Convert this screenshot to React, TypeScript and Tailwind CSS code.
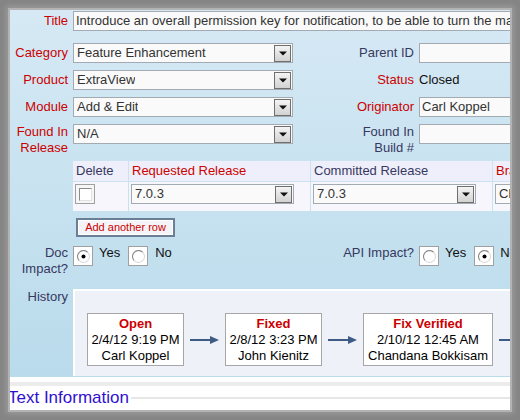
import React from "react";

const DropBtn = () => (
  <div className="ml-auto mr-px w-[17px] h-[17px] shrink-0 border border-[#6f6f6f] bg-gradient-to-b from-[#f4f4f4] to-[#d2d2d2] flex items-center justify-center">
    <svg width="8" height="5" viewBox="0 0 8 5">
      <path d="M0 0.5h8L4 4.5z" fill="#111" />
    </svg>
  </div>
);

const Select = ({ cls, text }: { cls: string; text: string }) => (
  <div className={`flex items-center h-[20px] bg-[#fafafa] border border-[#a4aab2] pl-[3px] shrink-0 ${cls}`}>
    <span className="text-[#333] whitespace-nowrap overflow-hidden">{text}</span>
    <DropBtn />
  </div>
);

const TextInput = ({ cls, text }: { cls: string; text?: string }) => (
  <div className={`h-[20px] bg-[#fafafa] border border-[#a4aab2] pl-[2px] leading-[18px] text-[#333] whitespace-nowrap overflow-hidden shrink-0 ${cls}`}>
    {text}
  </div>
);

const Radio = ({ checked }: { checked?: boolean }) => (
  <div className="mt-px w-[20px] h-[20px] shrink-0 border border-[#a0a0a0] bg-white flex items-center justify-center">
    <svg width="13" height="13" viewBox="0 0 13 13">
      <path d="M2.3 10.7A5.9 5.9 0 0 1 10.7 2.3" stroke="#8a8a8a" strokeWidth="1.2" fill="none" />
      <path d="M10.7 2.3A5.9 5.9 0 0 1 2.3 10.7" stroke="#dcdcdc" strokeWidth="1.2" fill="none" />
      <circle cx="6.5" cy="6.5" r="5" fill="#fff" />
      {checked && <circle cx="6.5" cy="6.5" r="2" fill="#000" />}
    </svg>
  </div>
);

const Arrow = () => (
  <svg width="29" height="10" viewBox="0 0 29 10" className="shrink-0">
    <line x1="0" y1="5" x2="21" y2="5" stroke="#3e5b85" strokeWidth="2" />
    <path d="M20 1L29 5L20 9z" fill="#3e5b85" />
  </svg>
);

const HistBox = ({ cls, state, date, who }: { cls: string; state: string; date: string; who: string }) => (
  <div className={`shrink-0 h-[53px] border border-[#a6a6a6] bg-white text-center pt-[2px] leading-[16px] text-black ${cls}`}>
    <div className="font-bold text-[#cc0000]">{state}</div>
    <div className="whitespace-nowrap">{date}</div>
    <div className="whitespace-nowrap">{who}</div>
  </div>
);

const red = "text-[#cc0000]";
const navy = "text-[#37385f]";
const lab = "w-[58px] shrink-0 text-right";
const lab2 = "w-[121px] shrink-0 text-right";

export default function App() {
  return (
    <div className="w-[520px] h-[420px] bg-[#858585] p-[10px] font-['Liberation_Sans',Arial,sans-serif] text-[13px]">
      <div className="w-[500px] h-[400px] bg-white overflow-hidden flex flex-col shadow-[0_0_0_2px_#b3b3b3,0_0_5px_4px_#9a9a9a]">
        <div className="pt-px pb-px bg-gradient-to-b from-[#d6e9f5] to-[#b9dbeb] flex flex-col overflow-hidden">
          <div className="flex items-start h-[20px]">
            <div className={`${lab} leading-[20px] ${red}`}>Title</div>
            <TextInput cls="ml-[5px] w-[440px]" text="Introduce an overall permission key for notification, to be able to turn the main notification off" />
          </div>
          <div className="flex items-start h-[20px] mt-[12px]">
            <div className={`${lab} leading-[20px] ${red}`}>Category</div>
            <Select cls="ml-[5px] w-[220px]" text="Feature Enhancement" />
            <div className={`${lab2} leading-[20px] ${navy}`}>Parent ID</div>
            <TextInput cls="ml-[5px] w-[100px]" />
          </div>
          <div className="flex items-start h-[20px] mt-[7px]">
            <div className={`${lab} leading-[20px] ${red}`}>Product</div>
            <Select cls="ml-[5px] w-[220px]" text="ExtraView" />
            <div className={`${lab2} leading-[20px] ${red}`}>Status</div>
            <div className="ml-[5px] shrink-0 leading-[20px] text-[#111]">Closed</div>
          </div>
          <div className="flex items-start h-[20px] mt-[7px]">
            <div className={`${lab} leading-[20px] ${red}`}>Module</div>
            <Select cls="ml-[5px] w-[220px]" text="Add & Edit" />
            <div className={`${lab2} leading-[20px] ${red}`}>Originator</div>
            <TextInput cls="ml-[5px] w-[100px]" text="Carl Koppel" />
          </div>
          <div className="flex items-start h-[32px] mt-[7px]">
            <div className={`${lab} leading-[16px] ${red}`}>Found In<br />Release</div>
            <Select cls="ml-[5px] w-[220px]" text="N/A" />
            <div className={`${lab2} leading-[16px] ${navy}`}>Found In<br />Build #</div>
            <TextInput cls="ml-[5px] w-[100px]" />
          </div>
          <div className="ml-[63px] mt-[5px] grid grid-cols-[55px_181px_181px_100px] gap-px w-[520px]">
            <div className={`h-[20px] bg-[#eeeffa] pl-[3px] leading-[20px] ${navy}`}>Delete</div>
            <div className={`h-[20px] bg-[#eeeffa] pl-[3px] leading-[20px] ${red}`}>Requested Release</div>
            <div className={`h-[20px] bg-[#eeeffa] pl-[3px] leading-[20px] ${navy}`}>Committed Release</div>
            <div className={`h-[20px] bg-[#eeeffa] pl-[3px] leading-[20px] whitespace-nowrap ${red}`}>Branch</div>
            <div className="h-[29px] bg-[#f6f6fc] pl-[2px] pt-[2px]">
              <div className="w-[20px] h-[20px] border border-[#a0a0a0] bg-[#f6f6f6] pl-[3px] pt-[3px]">
                <div className="w-[13px] h-[13px] bg-white border-t border-l border-t-[#8c8c8c] border-l-[#8c8c8c] border-b border-r border-b-[#e2e2e2] border-r-[#e2e2e2]" />
              </div>
            </div>
            <div className="h-[29px] bg-[#f6f6fc] pl-[2px] pt-[2px]">
              <Select cls="w-[163px]" text="7.0.3" />
            </div>
            <div className="h-[29px] bg-[#f6f6fc] pl-[2px] pt-[2px]">
              <Select cls="w-[163px]" text="7.0.3" />
            </div>
            <div className="h-[29px] bg-[#f6f6fc] pl-[2px] pt-[2px]">
              <Select cls="w-[90px]" text="Closed" />
            </div>
          </div>
          <div className="ml-[66px] mt-[7px] w-[99px] h-[19px] shrink-0 border-2 border-[#6a7e96] bg-[#f4f4f8] shadow-[inset_0_0_0_1px_#ffffff] flex items-center justify-center text-[11px] text-[#cc0000]">
            Add another row
          </div>
          <div className="flex items-start h-[32px] mt-[8px]">
            <div className={`${lab} leading-[16px] ${navy}`}>Doc<br />Impact?</div>
            <div className="ml-[5px] w-[220px] shrink-0 flex items-start leading-[16px] text-[#111]">
              <Radio checked />
              <span className="ml-[6px]">Yes</span>
              <div className="ml-[8px]"><Radio /></div>
              <span className="ml-[7px]">No</span>
            </div>
            <div className={`${lab2} leading-[16px] ${navy}`}>API Impact?</div>
            <div className="ml-[5px] shrink-0 flex items-start leading-[16px] text-[#111]">
              <Radio />
              <span className="ml-[6px]">Yes</span>
              <div className="ml-[8px]"><Radio checked /></div>
              <span className="ml-[6px]">No</span>
            </div>
          </div>
          <div className="flex items-start mt-[12px]">
            <div className={`${lab} leading-[16px] ${navy}`}>History</div>
            <div className="ml-[5px] w-[470px] shrink-0 h-[87px] border-t-2 border-l-2 border-white bg-[#eef1f8] pl-[12px] pt-[22px] flex items-start">
              <div className="flex items-center gap-[6px]">
                <HistBox cls="w-[97px]" state="Open" date="2/4/12 9:19 PM" who="Carl Koppel" />
                <Arrow />
                <HistBox cls="w-[97px]" state="Fixed" date="2/8/12 3:23 PM" who="John Kienitz" />
                <Arrow />
                <HistBox cls="w-[130px]" state="Fix Verified" date="2/10/12 12:45 AM" who="Chandana Bokkisam" />
                <Arrow />
              </div>
            </div>
          </div>
        </div>
        <div className="mt-[5px] h-[4px] shrink-0 bg-[#ececec]" />
        <div className="mt-[2px] flex items-center">
          <span className="-ml-[2px] text-[17px] leading-[20px] text-[#3010d0] whitespace-nowrap">Text Information</span>
          <div className="ml-[2px] flex-1 h-[2px] bg-[#e6e6e6]" />
        </div>
      </div>
    </div>
  );
}
